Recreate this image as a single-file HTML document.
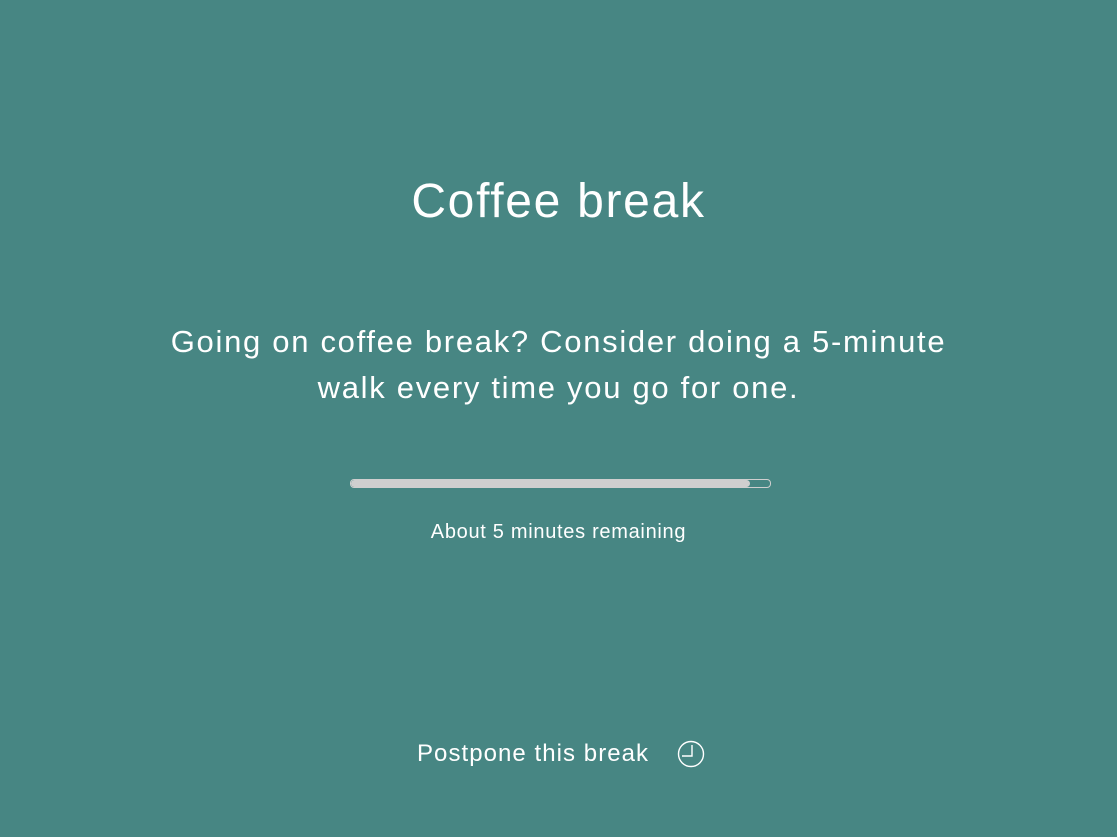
<!DOCTYPE html>
<html><head><meta charset="utf-8"><style>
html,body{margin:0;padding:0;width:1117px;height:837px;background:#478683;overflow:hidden;font-family:"Liberation Sans",sans-serif;color:#fff;}
.t{position:absolute;left:0;width:1117px;text-align:center;white-space:nowrap;}
</style></head><body>
<div class="t" style="top:170px;font-size:48px;line-height:64px;letter-spacing:1.7px;">Coffee break</div>
<div class="t" style="top:319px;font-size:31px;line-height:46px;letter-spacing:1.7px;">Going on coffee break? Consider doing a 5-minute<br>walk every time you go for one.</div>
<div style="position:absolute;left:350px;top:479px;width:419px;height:7px;border:1px solid #cfcfcf;border-radius:4px;"></div>
<div style="position:absolute;left:351px;top:480px;width:399px;height:7px;background:#cfcfcf;border-radius:4px;"></div>
<div class="t" style="top:519px;font-size:20px;line-height:26px;letter-spacing:0.7px;">About 5 minutes remaining</div>
<div style="position:absolute;left:417px;top:738px;font-size:24px;line-height:32px;letter-spacing:1.05px;">Postpone this break</div>
<svg style="position:absolute;left:676px;top:740px" width="30" height="30" viewBox="0 0 30 30"><circle cx="15" cy="14" r="12.5" fill="none" stroke="#fff" stroke-width="1.4"/><path d="M16 5V16H6" fill="none" stroke="#fff" stroke-width="1.4"/></svg>
</body></html>
